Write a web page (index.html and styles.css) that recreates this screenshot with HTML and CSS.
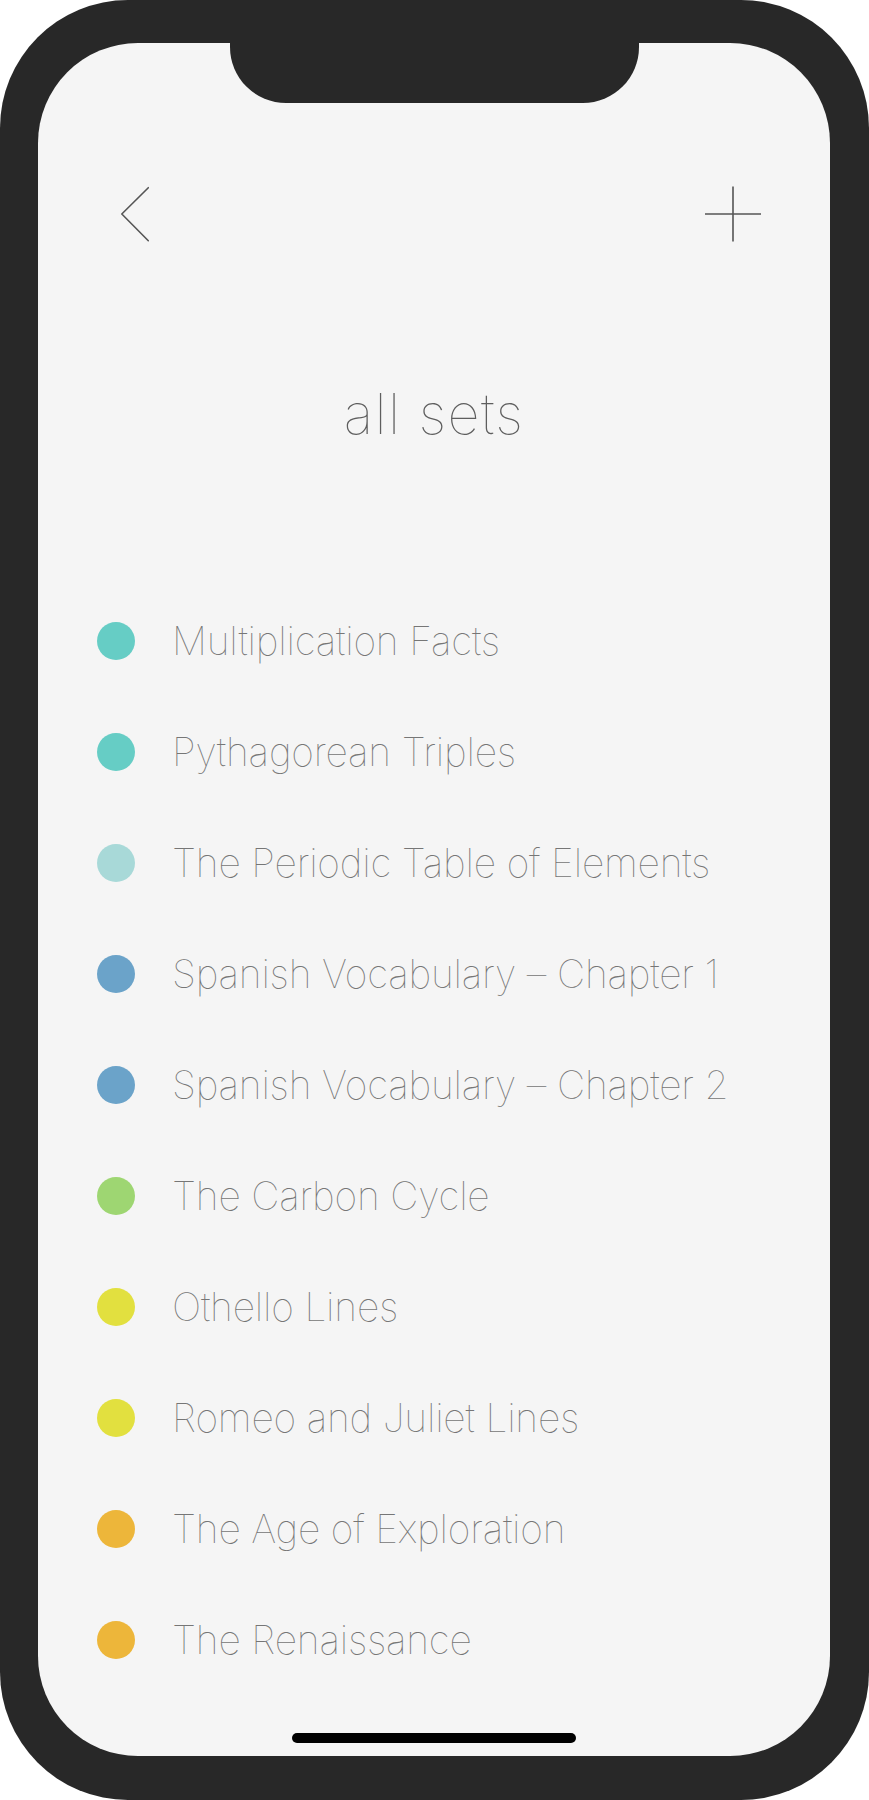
FILE: index.html
```html
<!DOCTYPE html>
<html lang="en">
<head>
<meta charset="utf-8">
<title>all sets</title>
<link rel="stylesheet" href="styles.css">
</head>
<body>
<div class="phone">
  <div class="screen">
    <div class="notch"></div>
    <header class="topbar">
      <svg class="icon-back" width="28" height="56" viewBox="0 0 28 56" aria-label="Back">
        <path d="M27.3 1.7 L0.8 28 L27.3 54.7" fill="none" stroke="#555" stroke-width="1.6" stroke-linecap="round" stroke-linejoin="miter"/>
      </svg>
      <svg class="icon-add" width="56" height="56" viewBox="0 0 56 56" aria-label="Add">
        <path d="M28 0.5 V55.5 M0 28 H56" fill="none" stroke="#555" stroke-width="1.6"/>
      </svg>
    </header>
    <h1 class="title">all sets</h1>
    <ul class="sets">
      <li class="set"><span class="dot teal"></span><span class="name">Multiplication Facts</span></li>
      <li class="set"><span class="dot teal"></span><span class="name">Pythagorean Triples</span></li>
      <li class="set"><span class="dot aqua"></span><span class="name">The Periodic Table of Elements</span></li>
      <li class="set"><span class="dot blue"></span><span class="name">Spanish Vocabulary – Chapter 1</span></li>
      <li class="set"><span class="dot blue"></span><span class="name">Spanish Vocabulary – Chapter 2</span></li>
      <li class="set"><span class="dot green"></span><span class="name">The Carbon Cycle</span></li>
      <li class="set"><span class="dot yellow"></span><span class="name">Othello Lines</span></li>
      <li class="set"><span class="dot yellow"></span><span class="name">Romeo and Juliet Lines</span></li>
      <li class="set"><span class="dot orange"></span><span class="name">The Age of Exploration</span></li>
      <li class="set"><span class="dot orange"></span><span class="name">The Renaissance</span></li>
    </ul>
    <div class="home-indicator"></div>
  </div>
</div>
</body>
</html>
```
FILE: styles.css
```css
html, body {
  margin: 0;
  padding: 0;
  background: #ffffff;
}

body {
  font-family: Inter, "Helvetica Neue", "Liberation Sans", sans-serif;
}

.phone {
  width: 869px;
  height: 1800px;
  box-sizing: border-box;
  padding: 43px 39px 44px 38px;
  background: #282828;
  border-radius: 128px;
}

.screen {
  position: relative;
  height: 100%;
  box-sizing: border-box;
  background: #f5f5f5;
  border-radius: 100px;
  display: flex;
  flex-direction: column;
}

.notch {
  position: absolute;
  top: 0;
  left: 192px;
  width: 409px;
  height: 60px;
  background: #282828;
  border-radius: 0 0 56px 56px;
}

.topbar {
  display: flex;
  justify-content: space-between;
  align-items: flex-start;
  padding: 143px 69px 0 83px;
}

.topbar svg {
  display: block;
}

.title {
  margin: 137px 0 0;
  font-size: 56px;
  line-height: 70px;
  font-weight: 100;
  color: #5e5e5e;
  text-align: center;
  letter-spacing: 1.4px;
}

.sets {
  list-style: none;
  margin: 136px 0 0;
  padding: 0 0 0 59px;
}

.set {
  display: flex;
  align-items: center;
  height: 111px;
  gap: 37px;
}

.dot {
  flex: none;
  width: 38px;
  height: 38px;
  border-radius: 50%;
}

.teal { background: #66cdc5; }
.aqua { background: #a8d9d8; }
.blue { background: #6ba3c9; }
.green { background: #9ed672; }
.yellow { background: #e2e03f; }
.orange { background: #edb63a; }

.name {
  font-size: 39px;
  line-height: 111px;
  font-weight: 100;
  color: #767676;
  white-space: nowrap;
  letter-spacing: -0.2px;
}

.home-indicator {
  margin: auto auto 13px;
  width: 284px;
  height: 10px;
  border-radius: 5px;
  background: #000000;
}
```
